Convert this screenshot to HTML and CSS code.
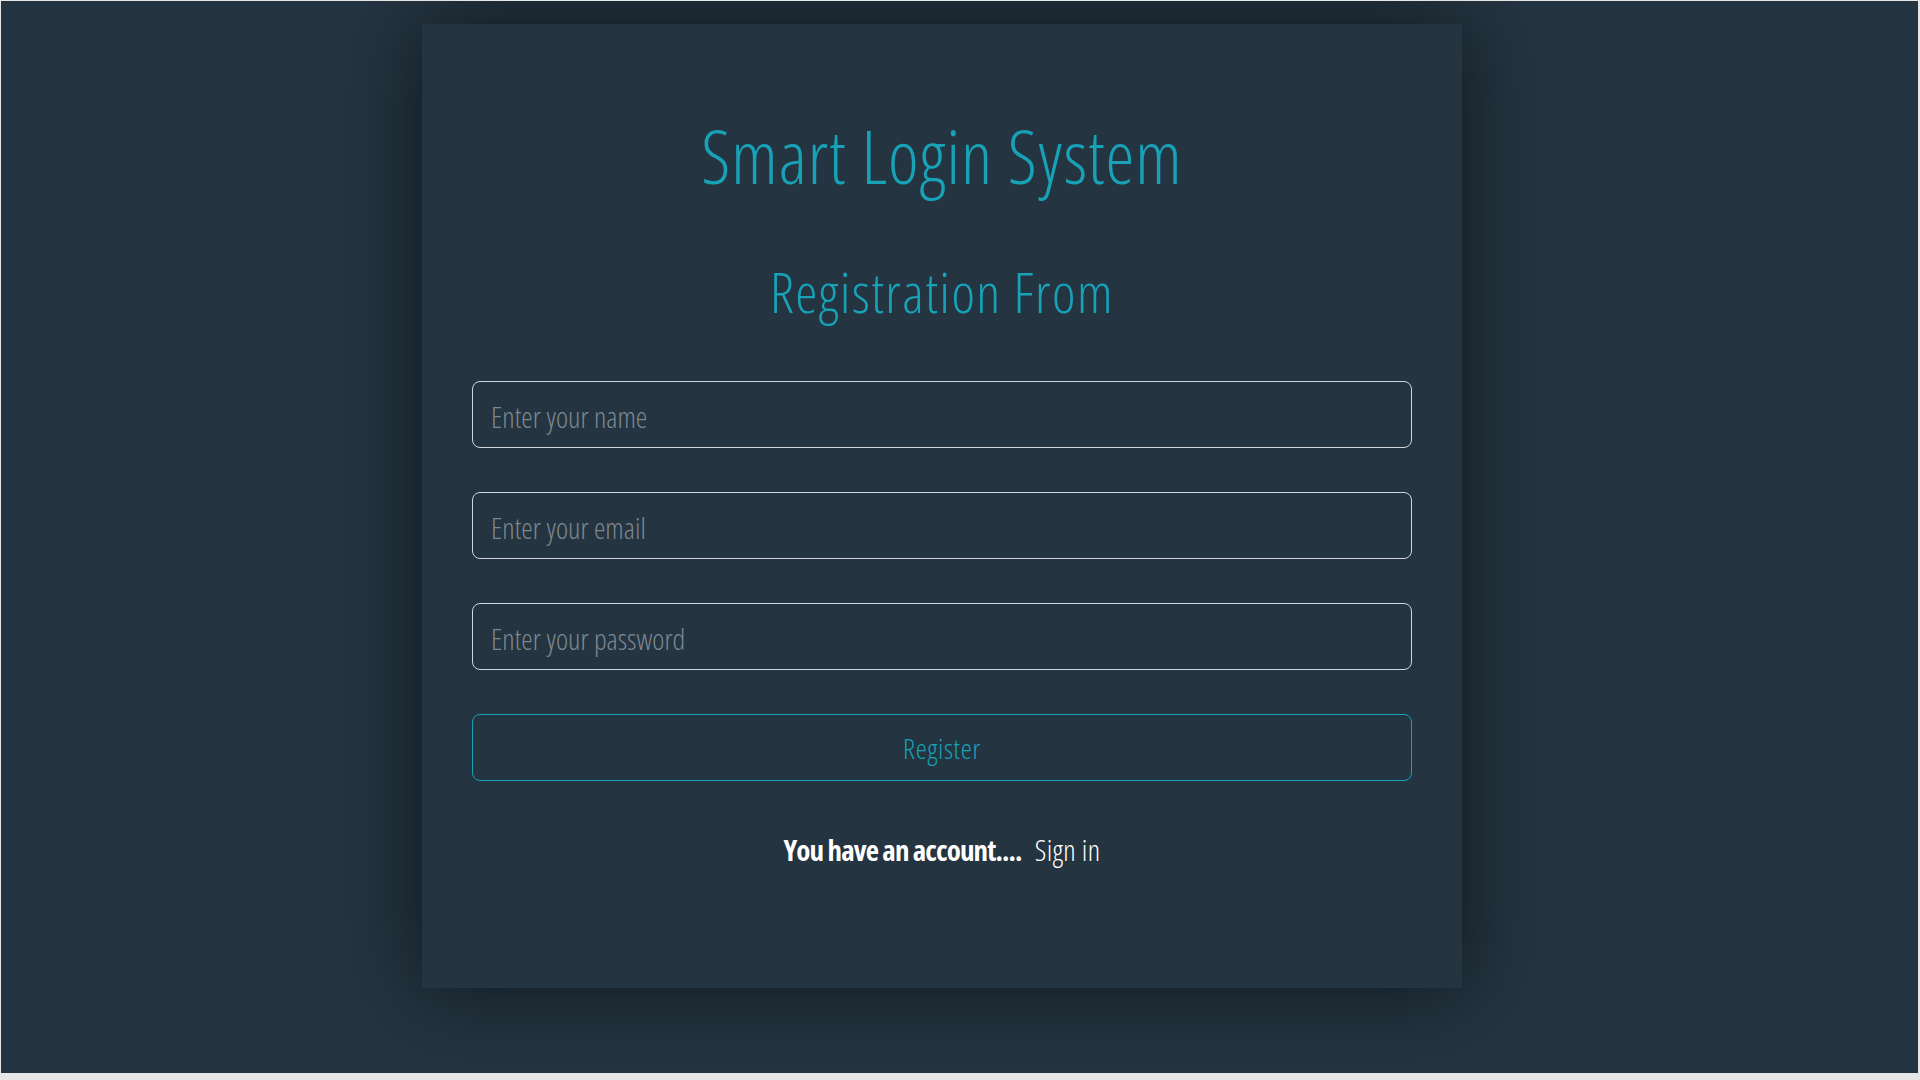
FILE: index.html
```html
<!DOCTYPE html>
<html lang="en">
<head>
<meta charset="utf-8">
<title>Smart Login System</title>
<link rel="stylesheet" href="styles.css">
</head>
<body>
<div class="page">
  <div class="card">
    <h1 class="title">Smart Login System</h1>
    <h2 class="subtitle">Registration From</h2>
    <form class="form">
      <input class="field" type="text" placeholder="Enter your name">
      <input class="field" type="email" placeholder="Enter your email">
      <input class="field" type="password" placeholder="Enter your password">
      <button class="btn" type="button">Register</button>
    </form>
    <p class="footer"><span class="ask">You have an account....</span> <a class="link" href="#">Sign in</a></p>
  </div>
</div>
</body>
</html>
```

FILE: styles.css
```css
html {
  background: #e4e6e8;
}
body {
  margin: 0;
  padding: 1px 2px 7px 1px;
  font-family: "Open Sans", "Liberation Sans", sans-serif;
  font-stretch: 75%;
}
.page {
  height: 1072px;
  background: #243440;
  overflow: hidden;
}
.card {
  width: 1040px;
  box-sizing: border-box;
  margin: 23px 0 0 421px;
  padding: 95px 50px 124px;
  background: #243440;
  box-shadow: 0 0 80px rgba(0, 0, 0, 0.55);
}
.title {
  margin: 0;
  font-size: 73px;
  line-height: 73px;
  font-weight: 300;
  letter-spacing: 1px;
  color: #17a2b8;
  text-align: center;
}
.subtitle {
  margin: 71px 0 0;
  font-size: 56px;
  line-height: 56px;
  font-weight: 300;
  letter-spacing: 1.4px;
  color: #17a2b8;
  text-align: center;
}
.form {
  margin-top: 62px;
  display: flex;
  flex-direction: column;
  gap: 44px;
}
.field, .btn {
  height: 67px;
  box-sizing: border-box;
  border-radius: 8px;
  background: transparent;
  font-family: inherit;
  font-stretch: 75%;
}
.field {
  border: 1.5px solid #d3d7db;
  padding: 4px 18px 0;
  font-size: 29px;
  font-weight: 300;
  color: #e8e8e8;
  outline: none;
}
.field::placeholder {
  color: #7d8790;
}
.btn {
  border: 1.5px solid #17a2b8;
  color: #17a2b8;
  font-size: 28px;
  font-weight: 300;
  letter-spacing: 0.7px;
}
.footer {
  margin: 54px 0 0;
  font-size: 29px;
  line-height: 29px;
  text-align: center;
  color: #ffffff;
}
.ask {
  font-weight: 700;
  letter-spacing: -0.9px;
}
.link {
  color: #ffffff;
  font-weight: 300;
  letter-spacing: 0.4px;
  text-decoration: none;
  margin-left: 8px;
}
```
